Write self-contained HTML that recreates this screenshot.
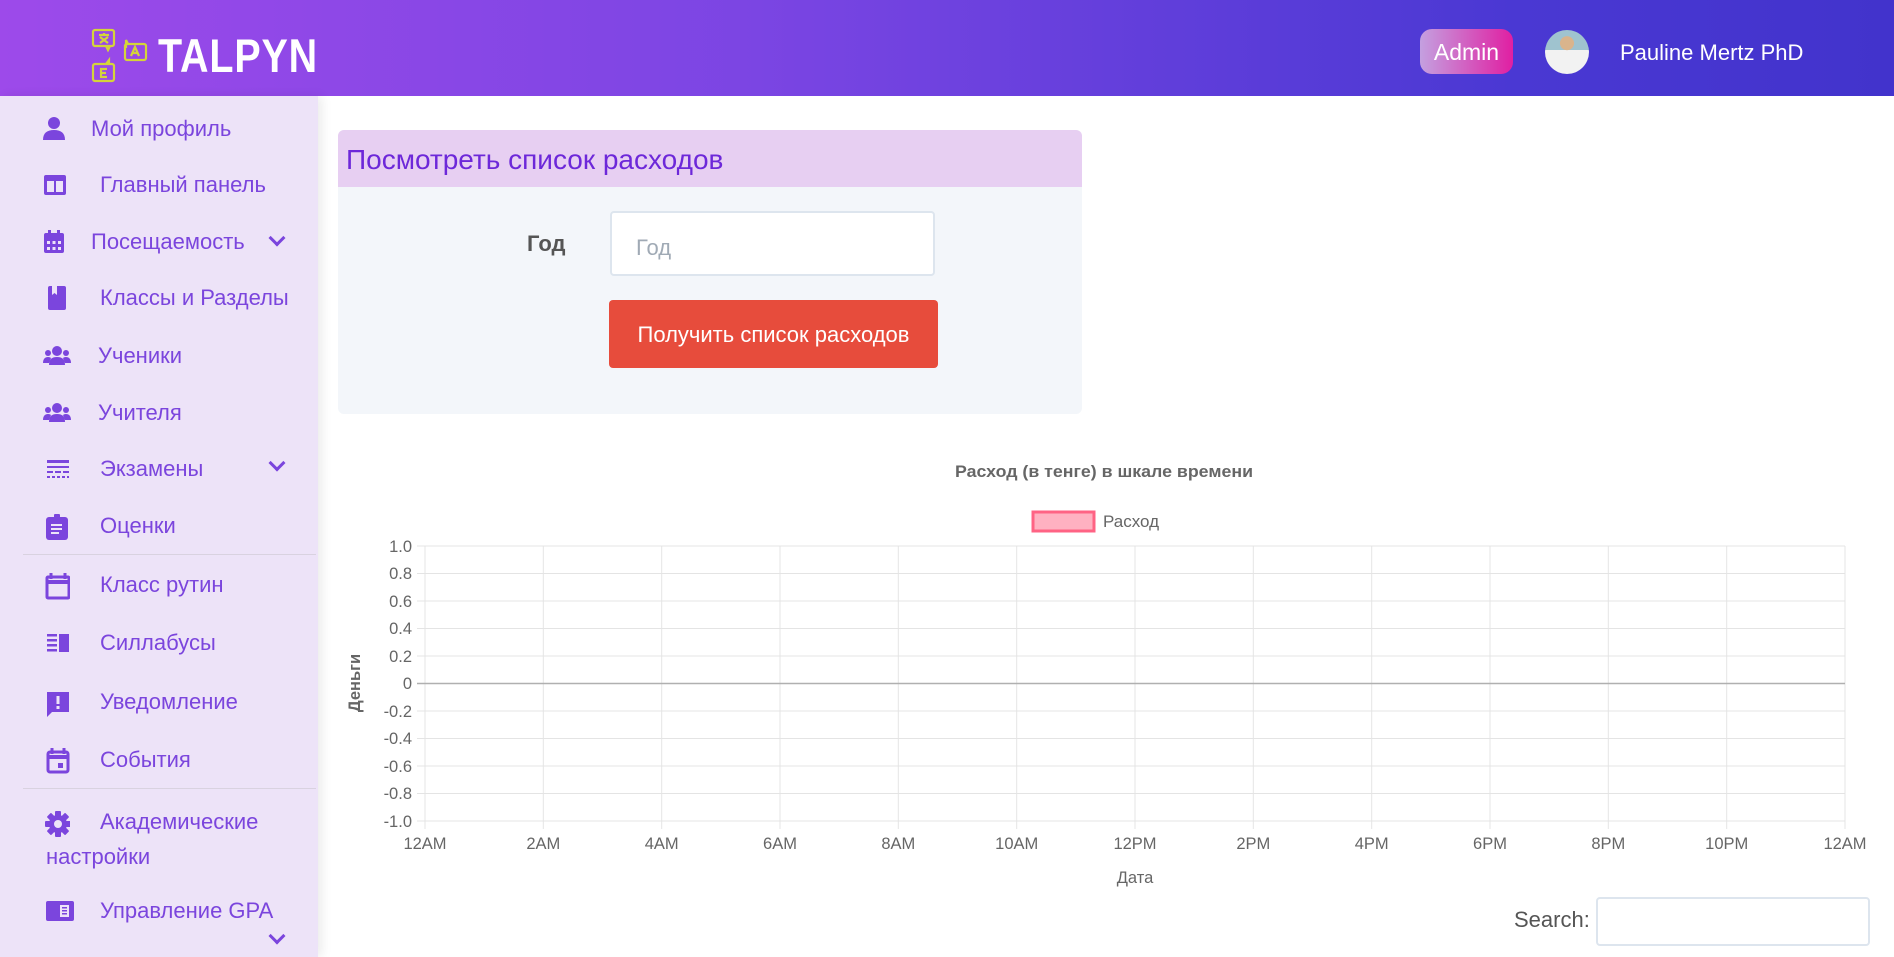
<!DOCTYPE html>
<html><head><meta charset="utf-8"><style>
*{margin:0;padding:0;box-sizing:border-box}
body{width:1894px;height:957px;overflow:hidden;background:#fff;font-family:"Liberation Sans",sans-serif;position:relative}
.hdr{position:absolute;left:0;top:0;width:1894px;height:96px;background:linear-gradient(90deg,#9d4aea 0%,#7b45e3 40%,#4a38d3 80%,#4233cc 100%)}
.logo{position:absolute;left:158px;top:30px;font-size:47px;font-weight:bold;color:#fff;transform:scaleX(.84);transform-origin:left top;letter-spacing:1px;line-height:52px}
.admin{position:absolute;left:1420px;top:29px;width:93px;height:45px;border-radius:12px;background:linear-gradient(90deg,#c4a0e0,#e01fa2);color:#fff;font-size:23px;text-align:center;line-height:47px}
.av{position:absolute;left:1545px;top:30px;width:44px;height:44px;border-radius:50%;background:radial-gradient(circle at 50% 30%,#d9b48c 0 18%,transparent 19%),linear-gradient(180deg,#9fc3cf 0 45%,#f2f2f2 45% 100%)}
.name{position:absolute;left:1620px;top:40px;color:#fff;font-size:22px}
.side{position:absolute;left:0;top:96px;width:318px;height:861px;background:#ede3f8;box-shadow:4px 0 10px rgba(0,0,0,.08)}
.it{position:absolute;left:0;color:#7b45dd;font-size:22px;line-height:26px}
.it svg{position:absolute;left:42px;top:0}
.it span{position:absolute;white-space:nowrap}
.chev{position:absolute;left:271px;width:12px;height:12px;border-right:3px solid #7b45dd;border-bottom:3px solid #7b45dd;transform:rotate(45deg)}
.div{position:absolute;left:23px;width:293px;height:1px;background:#d9d2e0}
.card{position:absolute;left:338px;top:130px;width:744px;height:284px;background:#f3f6fa;border-radius:6px}
.ch{position:absolute;left:0;top:0;width:744px;height:57px;background:#e7cff2;border-radius:6px 6px 0 0}
.ch span{position:absolute;left:8px;top:14px;font-size:28px;color:#6d28d9}
.lbl{position:absolute;left:527px;top:231px;font-size:22px;font-weight:bold;color:#555}
.inp{position:absolute;left:610px;top:211px;width:325px;height:65px;background:#fff;border:2px solid #dde5ee;border-radius:4px;font-size:22px;color:#a0aab5;padding:22px 0 0 24px}
.btn{position:absolute;left:609px;top:300px;width:329px;height:68px;background:#e74c3c;border-radius:4px;color:#fff;font-size:22px;text-align:center;line-height:70px}
.search{position:absolute;left:1514px;top:907px;font-size:22px;color:#555}
.sinp{position:absolute;left:1596px;top:897px;width:274px;height:49px;border:2px solid #dde5ee;border-radius:4px}
</style></head><body>
<div class="hdr">
<svg style="position:absolute;left:90px;top:27px" width="58" height="58" viewBox="0 0 58 58" fill="none" stroke="#d4d43a" stroke-width="2.2">
<rect x="3" y="3" width="21" height="16" rx="2"/><path d="M16 19l2 4 2-4"/><path d="M9 8h10M14 6v2M10 10l8 6M18 10l-8 6"/>
<rect x="35" y="17" width="21" height="16" rx="2"/><path d="M38 17l-2-4v8"/><path d="M41 29l4-9 4 9M42.5 26h5"/>
<rect x="3" y="37" width="21" height="17" rx="2"/><path d="M16 37l3-4v4"/><path d="M17 42h-6v8h6M11 46h5"/>
</svg>
<div class="logo">TALPYN</div>
<div class="admin">Admin</div>
<div class="av"></div>
<div class="name">Pauline Mertz PhD</div>
</div>
<div class="side">
<div class="it" style="top:20px"><svg width="24" height="26" viewBox="0 0 24 26" fill="#7b45dd"><circle cx="12" cy="7" r="6"/><path d="M1 24c0-7 4-10 11-10s11 3 11 10z"/></svg><span style="left:91px">Мой профиль</span></div>
<div class="it" style="top:76px"><svg width="26" height="26" viewBox="0 0 26 26"><rect x="2" y="3" width="22" height="20" rx="2" fill="#7b45dd"/><rect x="5" y="9" width="7" height="11" fill="#ede3f8"/><rect x="14" y="9" width="7" height="11" fill="#ede3f8"/></svg><span style="left:100px">Главный панель</span></div>
<div class="it" style="top:133px"><svg width="24" height="26" viewBox="0 0 24 26" fill="#7b45dd"><rect x="2" y="4" width="20" height="20" rx="2"/><rect x="6" y="1" width="3" height="5"/><rect x="15" y="1" width="3" height="5"/><g fill="#ede3f8"><rect x="5" y="12" width="3" height="3"/><rect x="10.5" y="12" width="3" height="3"/><rect x="16" y="12" width="3" height="3"/><rect x="5" y="18" width="3" height="3"/><rect x="10.5" y="18" width="3" height="3"/><rect x="16" y="18" width="3" height="3"/></g></svg><span style="left:91px">Посещаемость</span></div>
<div class="chev" style="top:136px"></div>
<div class="it" style="top:189px"><svg width="26" height="26" viewBox="0 0 26 26" fill="#7b45dd"><rect x="6" y="1" width="18" height="24" rx="2"/><path d="M10 1h5v9l-2.5-2-2.5 2z" fill="#ede3f8"/></svg><span style="left:100px">Классы и Разделы</span></div>
<div class="it" style="top:247px"><svg width="30" height="26" viewBox="0 0 30 26" fill="#7b45dd"><circle cx="15" cy="8" r="5"/><circle cx="6" cy="10" r="3"/><circle cx="24" cy="10" r="3"/><path d="M7 22c0-6 3-8 8-8s8 2 8 8z"/><path d="M1 20c0-4 2-6 5-6 2 0 3 1 3 1l-2 5z"/><path d="M29 20c0-4-2-6-5-6-2 0-3 1-3 1l2 5z"/></svg><span style="left:98px">Ученики</span></div>
<div class="it" style="top:304px"><svg width="30" height="26" viewBox="0 0 30 26" fill="#7b45dd"><circle cx="15" cy="8" r="5"/><circle cx="6" cy="10" r="3"/><circle cx="24" cy="10" r="3"/><path d="M7 22c0-6 3-8 8-8s8 2 8 8z"/><path d="M1 20c0-4 2-6 5-6 2 0 3 1 3 1l-2 5z"/><path d="M29 20c0-4-2-6-5-6-2 0-3 1-3 1l2 5z"/></svg><span style="left:98px">Учителя</span></div>
<div class="it" style="top:360px"><svg width="28" height="26" viewBox="0 0 28 26" fill="#7b45dd"><rect x="5" y="4" width="22" height="3"/><rect x="5" y="10" width="22" height="2"/><rect x="5" y="15" width="6" height="2"/><rect x="13" y="15" width="6" height="2"/><rect x="21" y="15" width="6" height="2"/><rect x="5" y="20" width="3" height="2"/><rect x="10" y="20" width="3" height="2"/><rect x="15" y="20" width="3" height="2"/><rect x="20" y="20" width="3" height="2"/><rect x="25" y="20" width="2" height="2"/></svg><span style="left:100px">Экзамены</span></div>
<div class="chev" style="top:361px"></div>
<div class="it" style="top:417px"><svg width="26" height="28" viewBox="0 0 26 28" fill="#7b45dd"><rect x="4" y="4" width="22" height="23" rx="3"/><rect x="12" y="1" width="6" height="5" rx="1"/><g fill="#ede3f8"><rect x="9" y="11" width="11" height="2"/><rect x="9" y="15" width="11" height="2"/><rect x="9" y="19" width="8" height="2"/></g></svg><span style="left:100px">Оценки</span></div>
<div class="div" style="top:458px"></div>
<div class="it" style="top:476px"><svg width="28" height="28" viewBox="0 0 28 28" fill="none" stroke="#7b45dd" stroke-width="3"><rect x="5" y="5" width="22" height="21" rx="1"/><path d="M5 10h22" stroke-width="4"/><path d="M9 1v6M23 1v6"/></svg><span style="left:100px">Класс рутин</span></div>
<div class="it" style="top:534px"><svg width="28" height="26" viewBox="0 0 28 26" fill="#7b45dd"><rect x="5" y="4" width="10" height="2.5"/><rect x="5" y="9" width="10" height="2.5"/><rect x="5" y="14" width="10" height="2.5"/><rect x="5" y="19" width="10" height="2.5"/><rect x="17" y="4" width="10" height="18"/></svg><span style="left:100px">Силлабусы</span></div>
<div class="it" style="top:593px"><svg width="28" height="28" viewBox="0 0 28 28" fill="#7b45dd"><path d="M5 3h22v20H10l-5 5z"/><rect x="14.5" y="7" width="3" height="8" fill="#ede3f8"/><rect x="14.5" y="17" width="3" height="3" fill="#ede3f8"/></svg><span style="left:100px">Уведомление</span></div>
<div class="it" style="top:651px"><svg width="28" height="28" viewBox="0 0 28 28" fill="none" stroke="#7b45dd" stroke-width="3"><rect x="6" y="5" width="20" height="20" rx="2"/><path d="M6 10h20" stroke-width="4"/><path d="M10 1v6M22 1v6"/><rect x="16" y="16" width="5" height="5" fill="#7b45dd" stroke="none"/></svg><span style="left:100px">События</span></div>
<div class="div" style="top:692px"></div>
<div class="it" style="top:713px"><svg width="28" height="28" viewBox="0 0 28 28"><g fill="#7b45dd" transform="translate(16 15)"><circle r="9"/><g><rect x="-3" y="-13" width="6" height="26" rx="1"/><rect x="-3" y="-13" width="6" height="26" rx="1" transform="rotate(45)"/><rect x="-3" y="-13" width="6" height="26" rx="1" transform="rotate(90)"/><rect x="-3" y="-13" width="6" height="26" rx="1" transform="rotate(135)"/></g><circle r="4" fill="#ede3f8"/></g></svg><span style="left:100px">Академические</span><span style="left:46px;top:35px">настройки</span></div>
<div class="it" style="top:802px"><svg width="32" height="26" viewBox="0 0 32 26"><rect x="4" y="3" width="28" height="20" rx="2" fill="#7b45dd"/><rect x="18" y="7" width="9" height="12" fill="#ede3f8"/><g fill="#7b45dd"><rect x="20" y="9" width="5" height="1.5"/><rect x="20" y="12" width="5" height="1.5"/><rect x="20" y="15" width="5" height="1.5"/></g></svg><span style="left:100px">Управление GPA</span></div>
<div class="chev" style="top:834px"></div>
</div>
<div class="card"><div class="ch"><span>Посмотреть список расходов</span></div></div>
<div class="lbl">Год</div>
<div class="inp">Год</div>
<div class="btn">Получить список расходов</div>
<svg style="position:absolute;left:0;top:0" width="1894" height="957" font-family="Liberation Sans, sans-serif">
<text x="1104" y="477" text-anchor="middle" font-size="17" font-weight="bold" fill="#666" textLength="298" lengthAdjust="spacingAndGlyphs">Расход (в тенге) в шкале времени</text>
<rect x="1033" y="512" width="61" height="19" fill="#ffb1c1" stroke="#ff6384" stroke-width="3"/>
<text x="1103" y="527" font-size="17" fill="#666">Расход</text>
<g stroke="#e4e4e4" stroke-width="1">
<line x1="417" y1="546" x2="1845" y2="546"/><line x1="417" y1="573.5" x2="1845" y2="573.5"/><line x1="417" y1="601" x2="1845" y2="601"/><line x1="417" y1="628.5" x2="1845" y2="628.5"/><line x1="417" y1="656" x2="1845" y2="656"/>
<line x1="417" y1="711" x2="1845" y2="711"/><line x1="417" y1="738.5" x2="1845" y2="738.5"/><line x1="417" y1="766" x2="1845" y2="766"/><line x1="417" y1="793.5" x2="1845" y2="793.5"/><line x1="417" y1="821" x2="1845" y2="821"/>
<line x1="425" y1="546" x2="425" y2="829"/><line x1="543.3" y1="546" x2="543.3" y2="829"/><line x1="661.7" y1="546" x2="661.7" y2="829"/><line x1="780" y1="546" x2="780" y2="829"/><line x1="898.3" y1="546" x2="898.3" y2="829"/><line x1="1016.7" y1="546" x2="1016.7" y2="829"/><line x1="1135" y1="546" x2="1135" y2="829"/><line x1="1253.3" y1="546" x2="1253.3" y2="829"/><line x1="1371.7" y1="546" x2="1371.7" y2="829"/><line x1="1490" y1="546" x2="1490" y2="829"/><line x1="1608.3" y1="546" x2="1608.3" y2="829"/><line x1="1726.7" y1="546" x2="1726.7" y2="829"/><line x1="1845" y1="546" x2="1845" y2="829"/>
</g>
<line x1="417" y1="683.5" x2="1845" y2="683.5" stroke="#b0b0b0" stroke-width="1.5"/>
<g font-size="16.5" fill="#666" text-anchor="end">
<text x="412" y="552">1.0</text><text x="412" y="579">0.8</text><text x="412" y="607">0.6</text><text x="412" y="634">0.4</text><text x="412" y="662">0.2</text><text x="412" y="689">0</text><text x="412" y="717">-0.2</text><text x="412" y="744">-0.4</text><text x="412" y="772">-0.6</text><text x="412" y="799">-0.8</text><text x="412" y="827">-1.0</text>
</g>
<g font-size="16.5" fill="#666" text-anchor="middle">
<text x="425" y="849">12AM</text><text x="543.3" y="849">2AM</text><text x="661.7" y="849">4AM</text><text x="780" y="849">6AM</text><text x="898.3" y="849">8AM</text><text x="1016.7" y="849">10AM</text><text x="1135" y="849">12PM</text><text x="1253.3" y="849">2PM</text><text x="1371.7" y="849">4PM</text><text x="1490" y="849">6PM</text><text x="1608.3" y="849">8PM</text><text x="1726.7" y="849">10PM</text><text x="1845" y="849">12AM</text>
<text x="1135" y="883">Дата</text>
<text transform="translate(360 683) rotate(-90)" font-weight="bold">Деньги</text>
</g>
</svg>
<div class="search">Search:</div>
<div class="sinp"></div>
</body></html>
